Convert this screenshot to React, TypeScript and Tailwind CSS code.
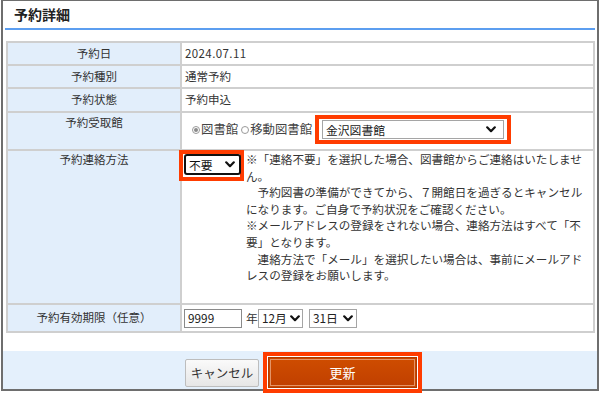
import React from "react";

const FONT = { fontFamily: '"Noto Sans CJK JP", "Noto Sans", sans-serif' };

function Chevron() {
  return (
    <svg width="10" height="7" viewBox="0 0 10 7" className="shrink-0">
      <path d="M1.2 1.3 L5 5.2 L8.8 1.3" fill="none" stroke="#111" strokeWidth="2.2" strokeLinecap="round" strokeLinejoin="round" />
    </svg>
  );
}

function Row({
  h,
  label,
  labelClass,
  last,
  children,
  valueClass,
}: {
  h: string;
  label: string;
  labelClass: string;
  last?: boolean;
  children: React.ReactNode;
  valueClass: string;
}) {
  return (
    <div className={`flex ${h} ${last ? "" : "border-b-2 border-[#cfcfcf]"}`}>
      <div className={`w-[174px] shrink-0 bg-[#e2eefb] border-r-2 border-[#cfcfcf] flex justify-center text-[11.5px] text-[#333] ${labelClass}`}>
        {label}
      </div>
      <div className={`flex-1 flex text-[11.5px] text-[#333] ${valueClass}`}>{children}</div>
    </div>
  );
}

function Radio({ checked }: { checked?: boolean }) {
  return (
    <span className="w-[8px] h-[8px] rounded-full border border-[#9a9a9a] bg-white flex items-center justify-center shrink-0">
      {checked && <span className="w-[4px] h-[4px] rounded-full bg-[#8a8a8a]" />}
    </span>
  );
}

export default function App() {
  const notes = [
    "※「連絡不要」を選択した場合、図書館からご連絡はいたしませ",
    "ん。",
    "　予約図書の準備ができてから、７開館日を過ぎるとキャンセル",
    "になります。ご自身で予約状況をご確認ください。",
    "※メールアドレスの登録をされない場合、連絡方法はすべて「不",
    "要」となります。",
    "　連絡方法で「メール」を選択したい場合は、事前にメールアド",
    "レスの登録をお願いします。",
  ];
  return (
    <div className="w-[600px] h-[397px] bg-white" style={FONT}>
      <div className="ml-[1px] w-[598px] h-[391px] border-x-2 border-t border-b-2 border-[#6e6e6e] flex flex-col">
        <div className="h-[27px] flex items-center pl-[11px] text-[14px] font-bold text-[#222]">予約詳細</div>
        <div className="mx-[2px] h-[2px] bg-[#5c9ef0]" />
        <div className="mt-[11px] ml-[3px] mr-[2px] border-2 border-[#cfcfcf] flex flex-col">
          <Row h="h-[23px]" label="予約日" labelClass="items-center" valueClass="items-center pl-[3px]">
            <span className="tracking-[0.4px]">2024.07.11</span>
          </Row>
          <Row h="h-[23px]" label="予約種別" labelClass="items-center" valueClass="items-center pl-[3px]">
            通常予約
          </Row>
          <Row h="h-[24px]" label="予約状態" labelClass="items-center" valueClass="items-center pl-[3px]">
            予約申込
          </Row>
          <Row h="h-[38px]" label="予約受取館" labelClass="items-start pt-[1px]" valueClass="items-start pt-[2px] pl-[10px]">
            <div className="w-[123px] shrink-0 h-[29px] flex items-center text-[12.4px] text-[#444] whitespace-nowrap">
              <Radio checked />
              <span className="ml-[1px] shrink-0">図書館</span>
              <span className="ml-[3px]" />
              <Radio />
              <span className="ml-[1px] shrink-0">移動図書館</span>
            </div>
            <div className="border-4 border-[#ff3c00] px-[3px] py-[1px] bg-white flex shrink-0">
              <div className="w-[182px] h-[19px] border border-[#a5a5a5] flex items-center justify-between pl-[3px] pr-[7px] text-[11.8px] text-[#222]">
                <span>金沢図書館</span>
                <Chevron />
              </div>
            </div>
          </Row>
          <Row h="h-[154px]" label="予約連絡方法" labelClass="items-start pt-[0px]" valueClass="items-start pl-[2px]">
            <div className="relative mt-[3px] shrink-0">
              <div className="absolute left-[-5px] top-[-4px] w-[65px] h-[31px] border-4 border-[#ff3c00]" />
              <div className="relative w-[57px] h-[21px] border-2 border-[#111] rounded-[3px] bg-white flex items-center justify-between pl-[3px] pr-[4px] text-[11.8px] text-[#111]">
                <span>不要</span>
                <Chevron />
              </div>
            </div>
            <div className="ml-[5px] mt-[0px] text-[11.6px] leading-[16.6px] text-[#333] whitespace-pre">
              {notes.map((n, i) => (
                <div key={i}>{n}</div>
              ))}
            </div>
          </Row>
          <Row h="h-[26px]" label="予約有効期限（任意）" labelClass="items-center" last valueClass="items-center pl-[2px]">
            <div className="w-[58px] h-[19px] border border-[#8a8a8a] flex items-center pl-[3px] text-[11.8px] text-[#222]">9999</div>
            <span className="ml-[4px] w-[12px] text-[11.8px]">年</span>
            <div className="ml-[0px] w-[45px] h-[19px] border border-[#a5a5a5] flex items-center justify-between pl-[3px] pr-[2px] text-[11.8px] text-[#222]">
              <span>12月</span>
              <Chevron />
            </div>
            <div className="ml-[6px] w-[48px] h-[19px] border border-[#a5a5a5] flex items-center justify-between pl-[3px] pr-[3px] text-[11.8px] text-[#222]">
              <span>31日</span>
              <Chevron />
            </div>
          </Row>
        </div>
        <div className="mt-[18px] h-[38px] bg-[#e4f0fc] flex items-start pl-[182px]">
          <button className="mt-[8px] w-[74px] h-[28px] border border-[#bdbdbd] rounded-[2px] bg-gradient-to-b from-[#fafafa] to-[#e6e6e6] text-[12.5px] text-[#333] flex items-center justify-center" style={FONT}>
            キャンセル
          </button>
          <div className="relative z-10 ml-[4px] mt-[1px] border-4 border-[#ff3c00] p-[1px] bg-white">
            <button
              className="w-[149px] h-[31px] bg-gradient-to-b from-[#cf4d00] to-[#c03f00] border border-[#b03a00] shadow-[inset_0_0_0_1px_#c84600,inset_0_0_0_2px_#e39468] text-white text-[13px] flex items-center justify-center"
              style={FONT}
            >
              更新
            </button>
          </div>
        </div>
      </div>
    </div>
  );
}
